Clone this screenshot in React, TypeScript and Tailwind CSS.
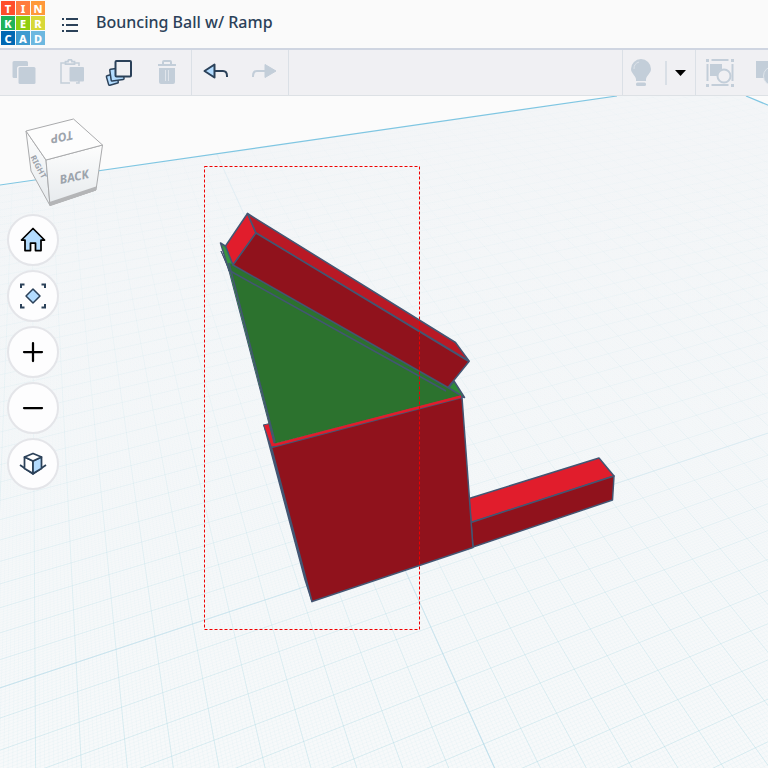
import type { ReactNode } from 'react';

const LOGO_TILES = [
  { letter: 'T', color: 'bg-[#ff4e2b]' },
  { letter: 'I', color: 'bg-[#ff7c3e]' },
  { letter: 'N', color: 'bg-[#ff983a]' },
  { letter: 'K', color: 'bg-[#1fb25a]' },
  { letter: 'E', color: 'bg-[#8fce10]' },
  { letter: 'R', color: 'bg-[#d8d838]' },
  { letter: 'C', color: 'bg-[#0068b3]' },
  { letter: 'A', color: 'bg-[#3f9bd0]' },
  { letter: 'D', color: 'bg-[#6db8e0]' },
];

// Perspective projection of workplane units to canvas pixels
function project(u: number, v: number) {
  const w = 1 + 0.0129 * u - 0.0268 * v;
  const x = (36.8 * u - 0.79 * v + 398.5) / w;
  const y = (-3.335 * u + 6.96 * v + 555.7) / w;
  return `${x.toFixed(1)} ${y.toFixed(1)}`;
}

const NEAR = 12;
const FAR = -37;
const LEFT = -22;
const RIGHT = 36;

function gridPath(step: number) {
  const parts: string[] = [];
  for (let u = LEFT; u <= RIGHT; u += step) {
    parts.push(`M${project(u, FAR)}L${project(u, NEAR)}`);
  }
  for (let v = FAR; v <= NEAR; v += step) {
    parts.push(`M${project(LEFT, v)}L${project(RIGHT, v)}`);
  }
  return parts.join('');
}

const MAJOR_GRID = gridPath(1);
const MINOR_GRID = gridPath(0.1);

function Logo() {
  return (
    <a href="#" aria-label="Tinkercad" className="grid grid-cols-3 gap-px p-px">
      {LOGO_TILES.map((tile) => (
        <span
          key={tile.letter}
          className={`${tile.color} flex size-[14px] items-center justify-center font-['Noto_Sans',sans-serif] text-[11px] leading-none font-extrabold text-white`}
        >
          {tile.letter}
        </span>
      ))}
    </a>
  );
}

interface ToolButtonProps {
  label: string;
  disabled?: boolean;
  children: ReactNode;
}

function ToolButton({ label, disabled, children }: ToolButtonProps) {
  return (
    <button
      type="button"
      aria-label={label}
      disabled={disabled}
      className="flex w-12 items-center justify-center"
    >
      <svg width="28" height="28" viewBox="0 0 28 28" fill="none" className="shrink-0">
        {children}
      </svg>
    </button>
  );
}

function NavButton({ label, children }: { label: string; children: ReactNode }) {
  return (
    <button
      type="button"
      aria-label={label}
      className="flex size-[52px] items-center justify-center rounded-full border-2 border-[#e4e5e9] bg-[#fdfdfe]"
    >
      <svg width="28" height="28" viewBox="0 0 28 28" fill="none">
        {children}
      </svg>
    </button>
  );
}

function Header() {
  return (
    <header className="flex h-[50px] shrink-0 items-start border-b-2 border-[#cfd5e1] bg-[#fafafa]">
      <Logo />
      <button type="button" aria-label="Designs" className="ml-[14px] flex h-[50px] w-5 items-center justify-center">
        <svg width="16" height="16" viewBox="0 0 16 16" className="fill-[#2b4159]">
          <path d="M0 1h2v2H0zM4 1h12v2H4zM0 7h2v2H0zM4 7h12v2H4zM0 13h2v2H0zM4 13h12v2H4z" />
        </svg>
      </button>
      <h1 className="ml-4 font-['Noto_Sans',sans-serif] text-[16px] leading-[44px] font-medium whitespace-nowrap text-[#2b4159]">
        Bouncing Ball w/ Ramp
      </h1>
    </header>
  );
}

function Toolbar() {
  return (
    <div role="toolbar" className="flex h-[46px] shrink-0 overflow-hidden border-b border-[#dde1e5] bg-[#f0f0f3]">
      <div className="flex w-48 shrink-0 border-r border-[#dbe0e6]">
        <ToolButton label="Copy" disabled>
          <path d="M4 2h12.500A1.500 1.500 0 0 1 18 3.500V7H9.500A2.500 2.500 0 0 0 7 9.500V19H4a1.500 1.500 0 0 1-1.500-1.500v-14A1.500 1.500 0 0 1 4 2z" fill="#c3ced9" />
          <rect x="8.500" y="8" width="17" height="17" rx="1.500" fill="#c3ced9" />
        </ToolButton>
        <ToolButton label="Paste" disabled>
          <path d="M7 4H3v20h9M17 4h4v3M21 22v2h-3" stroke="#c3ced9" strokeWidth="1.500" />
          <path d="M7.500 2.500h2.500a2 2 0 0 1 4 0h2.500V5h-9z" stroke="#c3ced9" strokeWidth="1.750" />
          <rect x="11.500" y="8" width="14.500" height="14.500" rx="1" fill="#c3ced9" />
        </ToolButton>
        <ToolButton label="Duplicate">
          <rect x="2.500" y="15.500" width="10" height="10" rx="1" transform="rotate(-16 7 21)" fill="#b3dcff" stroke="#2b4159" strokeWidth="1.500" />
          <rect x="5.500" y="9.500" width="13" height="12" rx="1" transform="rotate(-8 11 16)" fill="#b3dcff" stroke="#2b4159" strokeWidth="1.500" />
          <rect x="10.500" y="2" width="15.500" height="15.500" rx="1" fill="#f0f0f3" stroke="#2b4159" strokeWidth="2" />
        </ToolButton>
        <ToolButton label="Delete" disabled>
          <path d="M10 6V3a1 1 0 0 1 1-1h6a1 1 0 0 1 1 1v3M5 6h18" stroke="#c3ced9" strokeWidth="2" />
          <path d="M6 9h16v14a2 2 0 0 1-2 2H8a2 2 0 0 1-2-2z" fill="#c3ced9" />
          <path d="M12.500 11v11M15.500 11v11" stroke="#e0e5eb" />
        </ToolButton>
      </div>
      <div className="flex w-[97px] shrink-0 border-r border-[#dbe0e6]">
        <ToolButton label="Undo">
          <path d="M13 12h8c3 0 4 2 4 5v1" stroke="#2b4159" strokeWidth="2" />
          <path d="M2.500 12 12.500 5.500v13z" fill="#b3dcff" stroke="#2b4159" strokeWidth="2" strokeLinejoin="round" />
        </ToolButton>
        <ToolButton label="Redo" disabled>
          <path d="M15 12H7c-3 0-4 2-4 5v1" stroke="#c3ced9" strokeWidth="2" />
          <path d="M26 12 15 5.500v13z" fill="#c3ced9" stroke="#c3ced9" strokeLinejoin="round" />
        </ToolButton>
      </div>
      <div className="ml-auto flex shrink-0 items-center border-x border-[#dbe0e6]">
        <button type="button" aria-label="Show all" disabled className="flex w-9 items-center justify-center">
          <svg width="20" height="28" viewBox="0 0 20 28" fill="none">
            <path d="M10 0a10 10 0 0 0-10 10c0 4 4 6 5 10v2h10v-2c1-4 5-6 5-10A10 10 0 0 0 10 0z" fill="#c3ced9" />
            <path d="M3 10a7 7 0 0 1 5-7" stroke="#dde3ea" />
            <rect x="5" y="23.500" width="10" height="3.500" rx="1.500" fill="#c3ced9" />
          </svg>
        </button>
        <span className="ml-[6px] h-6 w-[2px] bg-[#d9dfe6]" />
        <button type="button" aria-label="Visibility options" className="flex h-full w-7 items-center justify-center pr-px">
          <svg width="11" height="6" viewBox="0 0 11 6">
            <path d="M0 0h11L5.500 6z" fill="#000" />
          </svg>
        </button>
      </div>
      <div className="flex shrink-0">
        <ToolButton label="Group" disabled>
          <path d="M5.500 1h17M5.500 26h17M1.500 5v17M26.500 5v17" stroke="#c3ced9" strokeWidth="2" />
          <path d="M0 0h3v3H0zM25 0h3v3h-3zM0 25h3v3H0zM25 25h3v3h-3z" fill="#c3ced9" />
          <path d="M4 5h12v5a8 8 0 0 0-5 7H4z" fill="#c3ced9" />
          <circle cx="18" cy="17" r="6.500" stroke="#c3ced9" strokeWidth="2" />
        </ToolButton>
      </div>
      <button type="button" aria-label="Ungroup" disabled className="flex w-6 shrink-0 items-center overflow-hidden pl-3">
        <svg width="28" height="28" viewBox="0 0 28 28" className="shrink-0">
          <path d="M0 2h17v17H0z" fill="#c3ced9" />
          <circle cx="17" cy="17" r="9.500" fill="#c3ced9" stroke="#dfe5eb" />
        </svg>
      </button>
    </div>
  );
}

function Scene() {
  return (
    <svg viewBox="0 96 768 672" preserveAspectRatio="xMidYMid slice" className="absolute inset-0 size-full">
      <defs>
        <linearGradient id="minor" gradientUnits="userSpaceOnUse" x1="0" y1="130" x2="0" y2="768">
          <stop offset="0" stopColor="#b5dde6" stopOpacity="0" />
          <stop offset="0.4" stopColor="#b5dde6" stopOpacity="0.03" />
          <stop offset="1" stopColor="#b5dde6" stopOpacity="0.16" />
        </linearGradient>
        <linearGradient id="major" gradientUnits="userSpaceOnUse" x1="0" y1="130" x2="0" y2="768">
          <stop offset="0" stopColor="#9fd3df" stopOpacity="0.03" />
          <stop offset="0.5" stopColor="#9fd3df" stopOpacity="0.12" />
          <stop offset="1" stopColor="#9fd3df" stopOpacity="0.3" />
        </linearGradient>
        <linearGradient id="axis" gradientUnits="userSpaceOnUse" x1="0" y1="130" x2="0" y2="768">
          <stop offset="0" stopColor="#a9d3e6" stopOpacity="0.15" />
          <stop offset="0.6" stopColor="#a9d3e6" stopOpacity="0.2" />
          <stop offset="1" stopColor="#a9d3e6" stopOpacity="0.5" />
        </linearGradient>
        <linearGradient id="floor" x1="0" y1="0" x2="0" y2="1">
          <stop offset="0" stopColor="#f3f5f7" />
          <stop offset="1" stopColor="#f7f9fa" />
        </linearGradient>
        <clipPath id="plane">
          <path d="M-2 185.300 617 96H746L770 106V770H-2z" />
        </clipPath>
      </defs>

      <g clipPath="url(#plane)">
        <rect x="-2" y="96" width="772" height="674" fill="url(#floor)" />
        <path d={MINOR_GRID} stroke="url(#minor)" strokeWidth="0.700" />
        <path d={MAJOR_GRID} stroke="url(#major)" />
        <path
          d={`M${project(LEFT, 0)}L${project(RIGHT, 0)}M${project(0, FAR)}L${project(0, NEAR)}`}
          stroke="url(#axis)"
          strokeWidth="1.200"
        />
      </g>
      <path d="M-2 185.300 617 96M746 96l24 10" stroke="#7fc6e2" strokeWidth="1.200" />

      <g stroke="#435673" strokeWidth="1.500" strokeLinejoin="round">
        {/* back bar */}
        <path d="M469 498.500 599 458l15 18-143 46.500z" fill="#e11d2c" />
        <path d="M471 522.500 614 476l-1.500 24L473 547z" fill="#90121c" />
        {/* box */}
        <path d="M264 425l7.500 22.500L312 601.500l-7-22z" fill="#a31522" />
        <path d="M263.500 425l6-1.500 6 20L461 395l1 2.500-190.500 50z" fill="#e11d2c" strokeWidth="1" />
        <path d="M271.500 447.500 462 397.500l11 150-161 54z" fill="#90121c" />
        {/* wedge */}
        <path d="M454 381l10.500 16.500-5-1.500-11-8z" fill="#2f8a38" />
        <path d="M220.500 243l5.500 3.500 8 20-5 4z" fill="#379441" />
        <path d="M221 251l7.500 18 45.500 174h2L232 275z" fill="#379441" strokeWidth="1" />
        <path d="M228 263l5 1 215 123.500 13 8L275 443.500z" fill="#2c722e" stroke="none" />
        <path d="M229 263l46 179M228.500 270 446 391M448 387.500 461 395.500" fill="none" />
        <path d="M274.500 445 461 396.500" stroke="#e11d2c" strokeWidth="2.500" />
        {/* ramp bar */}
        <path d="M247.500 213.500 256 233l-23 32-7.500-19z" fill="#e11d2c" />
        <path d="M247.500 213.500l208 129L469 361 256 233z" fill="#b91925" />
        <path d="M256 233l213 128.500-21 26L233 265z" fill="#90121c" />
      </g>

      <rect x="204.500" y="166.500" width="215" height="463" fill="none" stroke="#f00000" strokeDasharray="3 2" />
    </svg>
  );
}

function ViewCube() {
  return (
    <svg width="80" height="90" viewBox="24 117 80 90" role="img" aria-label="View cube" className="ml-6">
      <defs>
        <linearGradient id="cubeFace" x1="0" y1="0" x2="0" y2="1">
          <stop offset="0" stopColor="#fdfdfd" />
          <stop offset="1" stopColor="#e6eaed" />
        </linearGradient>
      </defs>
      <g stroke="#aaabad" strokeLinejoin="round">
        <path d="M26 131l20 29 4 45.500L31 171z" fill="url(#cubeFace)" />
        <path d="M46 160l56.500-15L96 190l-46 15.500z" fill="url(#cubeFace)" />
        <path d="M26 131l47.500-12 29 26L46 160z" fill="#fdfdfd" />
      </g>
      <path d="M49.500 202 96 186.500v4L50 206z" fill="#b4b5b7" />
      <g className="fill-[#9da4ac] font-['Noto_Sans',sans-serif] font-bold" textAnchor="middle">
        <text transform="translate(61 133) rotate(168)" className="text-[12px] italic">TOP</text>
        <text transform="translate(75 181) rotate(-12)" className="text-[12px] italic">BACK</text>
        <text transform="translate(36 168) rotate(62)" className="text-[8px]">RIGHT</text>
      </g>
    </svg>
  );
}

function Canvas() {
  return (
    <main className="relative min-h-0 flex-1 overflow-hidden bg-[#fbfbfb]">
      <Scene />
      <div className="absolute top-[21px] left-0 flex flex-col">
        <ViewCube />
        <nav aria-label="View controls" className="mt-[7px] ml-[7px] flex flex-col gap-1">
          <NavButton label="Home view">
            <path d="M14 2.500 2.500 14H6v10.500h5.500V17h5v7.500H22V14h3.500z" fill="#b3dcff" stroke="#000" strokeWidth="1.750" strokeLinejoin="round" />
          </NavButton>
          <NavButton label="Fit all in view">
            <path d="M2 6V2.500h3.500M22.500 2.500H26V6M26 22v3.500h-3.500M5.500 25.500H2V22" stroke="#2b4159" strokeWidth="2" />
            <path d="M14 7l7 7-7 7-7-7z" fill="#b3dcff" stroke="#2b4159" strokeWidth="1.500" strokeLinejoin="round" />
          </NavButton>
          <NavButton label="Zoom in">
            <path d="M14 5v18M5 14h18" stroke="#000" strokeWidth="2.250" strokeLinecap="round" />
          </NavButton>
          <NavButton label="Zoom out">
            <path d="M5 14h18" stroke="#000" strokeWidth="2.250" strokeLinecap="round" />
          </NavButton>
          <NavButton label="Orthographic view">
            <path d="M1 15l13 9 13-9" stroke="#2b4159" strokeWidth="1.750" />
            <path d="M5.500 7 14 11v12.500l-8.500-5z" fill="#fff" stroke="#2b4159" strokeWidth="1.750" strokeLinejoin="round" />
            <path d="M22.500 7 14 11v12.500l8.500-5z" fill="#b3dcff" stroke="#2b4159" strokeWidth="1.750" strokeLinejoin="round" />
            <path d="M5.500 7 14 3.500 22.500 7 14 11z" fill="#fff" stroke="#2b4159" strokeWidth="1.750" strokeLinejoin="round" />
          </NavButton>
        </nav>
      </div>
    </main>
  );
}

export default function App() {
  return (
    <div className="flex h-screen flex-col overflow-hidden">
      <Header />
      <Toolbar />
      <Canvas />
    </div>
  );
}
